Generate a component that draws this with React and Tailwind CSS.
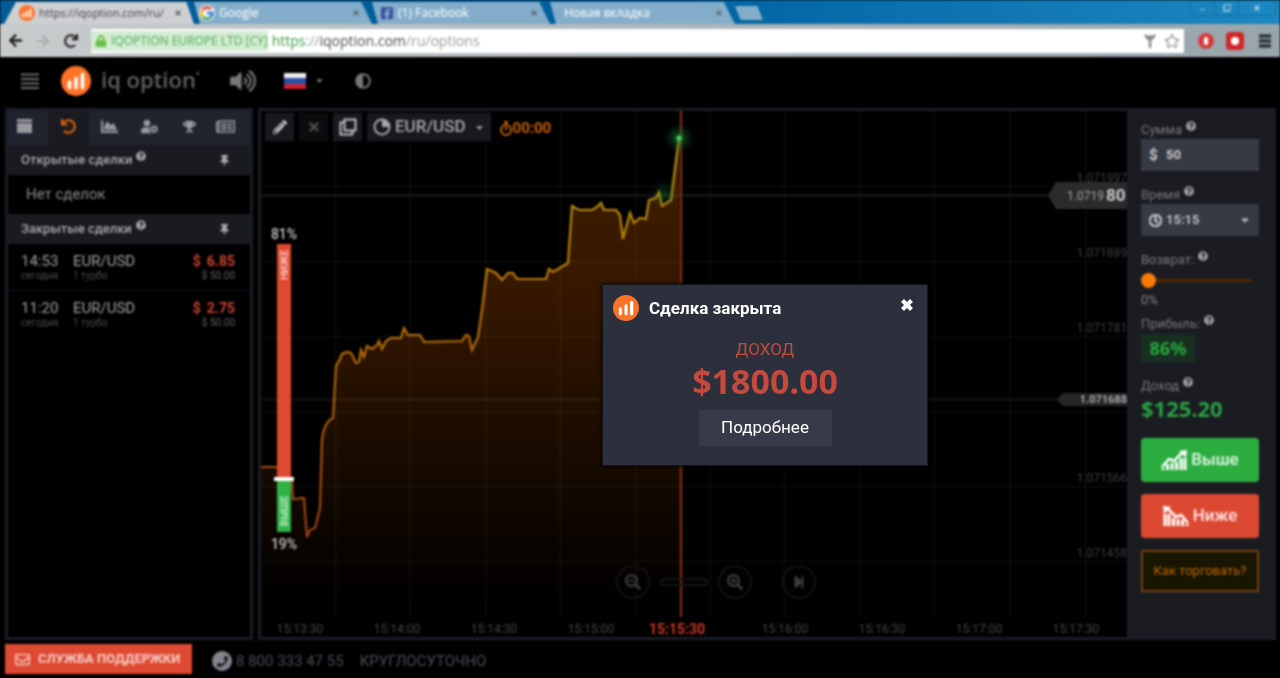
import React from "react";
import {
  FaArrowLeft, FaArrowRight, FaRedo, FaLock, FaVolumeUp, FaCaretDown, FaAdjust,
  FaUndo, FaChartArea, FaPencilAlt, FaTimes, FaQuestionCircle, FaThumbtack, FaRegStar,
  FaRegEnvelope, FaPhoneAlt, FaSearchMinus, FaSearchPlus, FaStepForward, FaRegClock,
  FaTrophy, FaRegNewspaper, FaUserCog, FaFacebookSquare, FaRegClone,
} from "react-icons/fa";

const LINE =
  "M261 467 L277 467 L292 480 L293 499 L304 498 L307 537 L310 530 L315 528 L320 508 L322 440 Q324 422 333 418 L336 366 Q339 362 342 354 Q347 351 351 353 L356 363 L359 362 L361 350 L364 357 L367 346 L372 349 L377 345 L379 341 L382 349 L386 341 L391 338 L401 338 L404 328 L408 335 L420 335 L424 342 L462 341 L466 335 L469 336 L472 350 L478 337 L482 310 L487 269 L496 273 L502 280 L508 273 L513 273 L517 279 L546 279 L549 269 L553 272 L568 263 L572 206 L579 210 L592 210 L597 207 L601 203 L604 210 L616 210 L620 215 L623 239 L630 213 L634 223 L640 218 L646 219 L649 200 L656 198 L659 192 L662 206 L671 200 L679 138";

function BrandMark({ className }) {
  return (
    <svg viewBox="0 0 30 30" className={className} aria-hidden="true">
      <circle cx="15" cy="15" r="15" fill="#ff7328" />
      <g stroke="#fff" strokeWidth="3.600" strokeLinecap="round">
        <path d="M8.500 21.500V16M15 21.500V12.500M21.500 21.500V8.500" />
      </g>
    </svg>
  );
}

function Tab({ icon, title, className }) {
  return (
    <div className={`flex h-[22px] items-center gap-1 pr-3 ${className}`}>
      {icon}
      <span className="flex-1 whitespace-nowrap">{title}</span>
      <button aria-label="Закрыть вкладку" className="text-[#5c6670]"><FaTimes size={8} /></button>
    </div>
  );
}

function GoogleMark() {
  return (
    <svg viewBox="0 0 16 16" className="h-4 w-4 shrink-0" aria-hidden="true">
      <circle cx="8" cy="8" r="8" fill="#f4f4f4" />
      <g fill="none" strokeWidth="3">
        <path d="M3.500 5A5.500 5.500 0 0 1 12 4" stroke="#e2574c" />
        <path d="M3.500 5A5.500 5.500 0 0 0 4 12" stroke="#eec23c" />
        <path d="M4 12A5.500 5.500 0 0 0 11 12.500" stroke="#4caf6a" />
        <path d="M11 12.500A5.500 5.500 0 0 0 13.500 8H8" stroke="#4d86d8" />
      </g>
    </svg>
  );
}

function BrowserChrome() {
  const idle = "bg-[#83adca] text-[12px] text-white [clip-path:polygon(0_0,94%_0,100%_100%,6px_100%)]";
  return (
    <div className="font-['Open_Sans','Noto_Sans',sans-serif]">
      <div className="flex h-6 items-end justify-between bg-gradient-to-r from-[#005a96] via-[#00609f] to-[#1c88c2]">
        <div className="flex items-end pl-1">
          <Tab className="w-[190px] bg-[#cdcfd0] pl-[15px] text-[11px] text-[#4b4650] [clip-path:polygon(12px_0,96%_0,100%_100%,0_100%)]" icon={<BrandMark className="h-4 w-4 shrink-0" />} title="https://iqoption.com/ru/" />
          <Tab className={`w-[178px] pl-[5px] ${idle}`} icon={<GoogleMark />} title="Google" />
          <Tab className={`w-[178px] pl-2 ${idle}`} icon={<FaFacebookSquare className="shrink-0 text-[#3a559f]" size={14} />} title="(1) Facebook" />
          <Tab className={`w-[185px] pl-[14px] ${idle}`} title="Новая вкладка" />
          <button aria-label="Открыть вкладку" className="mb-1 h-[14px] w-7 bg-[#83adca] [clip-path:polygon(0_0,80%_0,100%_100%,20%_100%)]" />
        </div>
        <div className="mb-2 mr-1 flex h-4 divide-x divide-[#1670a3] border border-[#1670a3] text-[11px] leading-3 text-[#b9d9ea]">
          <button aria-label="Свернуть" className="w-6">–</button>
          <button aria-label="Развернуть" className="flex w-6 items-center justify-center"><FaRegClone size={8} /></button>
          <button aria-label="Закрыть" className="flex w-9 items-center justify-center"><FaTimes size={8} /></button>
        </div>
      </div>
      <div className="flex h-[33px] items-center bg-gradient-to-r from-[#c9cccd] to-[#98a5ad] pl-2 text-[#1d1d1d]">
        <button aria-label="Назад" className="w-7"><FaArrowLeft size={15} /></button>
        <button aria-label="Вперёд" className="w-7 text-[#a9abac]"><FaArrowRight size={14} /></button>
        <button aria-label="Обновить" className="w-[27px]"><FaRedo size={14} /></button>
        <div className="flex h-6 flex-1 items-center bg-white pr-1">
          <span className="flex h-5 items-center gap-1 whitespace-nowrap bg-[#d3ecd3] pl-1 text-[12px] text-[#4fae55]">
            <FaLock className="text-[#6cc04a]" size={12} />
            IQOPTION EUROPE LTD [CY]
          </span>
          <span className="flex-1 pl-1 text-[14px] text-[#a0a0a0]">
            <span className="text-[#3fa048]">https</span>://<span className="text-[#555]">iqoption.com</span>/ru/options
          </span>
          <svg viewBox="0 0 12 14" className="mr-2 h-[14px] w-3" fill="none" stroke="#888" strokeWidth="2.500" aria-hidden="true"><path d="M1 1L6 6L11 1M6 1V14M2 4H10" /></svg>
          <FaRegStar className="text-[#999]" size={16} />
        </div>
        <div className="flex items-center gap-3 pl-[14px] pr-2">
          <span className="flex h-4 w-4 items-center justify-center rounded-full bg-[#d43c3c]"><span className="h-2 w-1 rounded-full bg-white" /></span>
          <span className="flex h-[18px] w-[18px] items-center justify-center rounded-sm bg-[#d02828]"><span className="h-2 w-2 rounded-full bg-white" /></span>
          <button aria-label="Меню браузера" className="pl-0.5">
            <svg viewBox="0 0 14 14" className="h-[14px] w-[14px]" aria-hidden="true"><path d="M1 2H13M1 7H13M1 12H13" stroke="#2f3437" strokeWidth="3.500" /></svg>
          </button>
        </div>
      </div>
    </div>
  );
}

function SiteHeader() {
  return (
    <header className="flex h-[51px] items-center pb-1 pl-[21px] text-[#777]">
      <button aria-label="Меню">
        <svg viewBox="0 0 18 16" className="h-4 w-[18px]" aria-hidden="true"><path d="M0 1.500H18M0 6H18M0 10.500H18M0 15H18" stroke="#6c6c6c" strokeWidth="2" /></svg>
      </button>
      <BrandMark className="ml-[22px] h-[30px] w-[30px]" />
      <span className="ml-[10px] mb-1 flex font-['Open_Sans',sans-serif] text-[22px] font-semibold leading-7 text-[#606060]">
        iq option<span className="text-[10px] leading-4">•</span>
      </span>
      <button aria-label="Звук" className="ml-[30px]"><FaVolumeUp size={26} /></button>
      <button aria-label="Язык" className="ml-7 flex items-center gap-2">
        <svg viewBox="0 0 22 16" className="h-4 w-[22px]" aria-hidden="true">
          <path fill="#eee" d="M0 0h22v6H0z" /><path fill="#2a50a8" d="M0 5h22v6H0z" /><path fill="#d32030" d="M0 11h22v5H0z" />
        </svg>
        <FaCaretDown size={11} />
      </button>
      <button aria-label="Тема" className="ml-[30px]"><FaAdjust size={16} /></button>
    </header>
  );
}

function SectionTitle({ children }) {
  return (
    <div className="flex h-[30px] items-center bg-[#191b21] pl-[13px] pr-5 text-[13px] font-medium text-[#a9aaad]">
      <h2>{children}</h2>
      <FaQuestionCircle size={10} className="mb-2 ml-1" />
      <button aria-label="Закрепить" className="ml-auto"><FaThumbtack size={11} /></button>
    </div>
  );
}

const deals = [
  { time: "14:53", profit: "6.85" },
  { time: "11:20", profit: "2.75" },
];

function DealsPanel() {
  const item = "flex h-[34px] w-10 items-center justify-center pb-1";
  return (
    <aside className="w-[248px] shrink-0 border-[3px] border-[#1a1d26]">
      <nav className="flex h-[34px] items-center bg-[#20242f] text-[#97999d]">
        <button aria-label="Портфель" className={`${item} pr-2`}>
          <svg viewBox="0 0 15 14" className="h-[14px] w-[15px]" fill="currentColor"><path d="M0 0h15v3H0zM0 4h15v10H0z" /></svg>
        </button>
        <button aria-label="История" className="flex h-[34px] w-[41px] items-center justify-center bg-[#191b21] pb-1 text-[#dc650d]"><FaUndo size={15} /></button>
        <button aria-label="Графики" className={item}><FaChartArea size={17} /></button>
        <button aria-label="Сообщество" className={item}><FaUserCog size={17} /></button>
        <button aria-label="Турниры" className={item}><FaTrophy size={13} /></button>
        <button aria-label="Новости" className={`${item} pr-2`}><FaRegNewspaper size={19} /></button>
      </nav>
      <SectionTitle>Открытые сделки</SectionTitle>
      <p className="flex h-[39px] items-center pl-[18px] text-[15px] text-[#8b8b8b]">Нет сделок</p>
      <SectionTitle>Закрытые сделки</SectionTitle>
      <ul>
        {deals.map((d) => (
          <li key={d.time} className="flex h-[47px] items-start border-b border-[#121318] pl-[13px] pr-[15px] pt-2 text-[15px] leading-[18px] text-[#a0a0a0] last:border-0">
            <div className="w-[52px]">{d.time}<div className="text-[10px] leading-[11px] text-[#4a4a4a]">сегодня</div></div>
            <div className="flex-1">EUR/USD<div className="text-[10px] leading-[11px] text-[#4a4a4a]">1 турбо</div></div>
            <div className="text-right text-[14px] font-bold text-[#cf4433]">
              <div className="flex justify-end gap-[6px]"><span>$</span><span>{d.profit}</span></div>
              <div className="text-[10px] font-normal leading-[11px] text-[#606060]">$ 50.00</div>
            </div>
          </li>
        ))}
      </ul>
    </aside>
  );
}

function Plot() {
  return (
    <svg viewBox="261 111 866 526" className="block w-full bg-black font-['Roboto',sans-serif]" role="img" aria-label="График EUR/USD">
      <defs>
        <linearGradient id="area" gradientUnits="userSpaceOnUse" x1="0" y1="138" x2="0" y2="600">
          <stop offset="0" stopColor="#3f1f00" /><stop offset="0.35" stopColor="#351700" /><stop offset="0.75" stopColor="#140900" /><stop offset="1" stopColor="#000" />
        </linearGradient>
        <linearGradient id="stroke" gradientUnits="userSpaceOnUse" x1="0" y1="138" x2="0" y2="540">
          <stop offset="0" stopColor="#b09a18" /><stop offset="0.35" stopColor="#bd7a08" /><stop offset="1" stopColor="#9c4010" />
        </linearGradient>
        <radialGradient id="glow"><stop offset="0" stopColor="#1ea048" stopOpacity="0.600" /><stop offset="1" stopColor="#0b5a20" stopOpacity="0" /></radialGradient>
      </defs>
      <path d={`${LINE} L681 617 L261 617 Z`} fill="url(#area)" />
      <g stroke="#fff" strokeOpacity="0.060">
        <path d="M335.500 111V617M410.500 111V617M485.500 111V617M560.500 111V617M635.500 111V617M710.500 111V617M784.500 111V617M859.500 111V617M934.500 111V617M1010.500 111V617M1085.500 111V617" />
        <path d="M261 186.500H1127M261 261.500H1127M261 336.500H1127M261 411.500H1127M261 486.500H1127M261 561.500H1127" />
        <path d="M261 195.500H1127" strokeOpacity="0.110" strokeWidth="2" />
        <path d="M261 399.500H1127" strokeOpacity="0.080" strokeWidth="2" />
      </g>
      <path d={LINE} fill="none" stroke="url(#stroke)" strokeWidth="2.200" />
      <path d="M681 111V617" stroke="#80301e" strokeWidth="2.200" />
      <circle cx="664" cy="194" r="15" fill="url(#glow)" opacity="0.500" />
      <circle cx="679" cy="138" r="15" fill="url(#glow)" />
      <circle cx="679" cy="138" r="2.600" fill="#3bd75c" />

      <rect x="277" y="244" width="14" height="234" fill="#de4930" />
      <rect x="277" y="480" width="14" height="52" fill="#2fb347" />
      <rect x="274" y="477" width="20" height="4" fill="#fff" />
      <g fill="#c4c4c4" fontSize="14" fontWeight="500" textAnchor="middle">
        <text x="284" y="239">81%</text><text x="284" y="549">19%</text>
      </g>
      <g fill="#fff" fillOpacity="0.700" fontSize="10" fontWeight="700" textAnchor="middle">
        <text transform="translate(288 265) rotate(-90)">НИЖЕ</text>
        <text transform="translate(288 511) rotate(-90)">ВЫШЕ</text>
      </g>

      <g fill="#3e3e3e" fontSize="12" textAnchor="end">
        <text x="1127" y="182">1.071997</text><text x="1127" y="257">1.071889</text><text x="1127" y="332">1.071781</text>
        <text x="1127" y="482">1.071566</text><text x="1127" y="557">1.071458</text>
      </g>
      <path d="M1048 195.500L1056 182H1127V209H1056Z" fill="#2b2b2b" />
      <text x="1067" y="200" fill="#aaa" fontSize="12">1.0719</text>
      <text x="1106" y="201" fill="#ccc" fontSize="17" fontWeight="700">80</text>
      <path d="M1063 393H1127V406H1063L1057 399.500Z" fill="#272727" />
      <text x="1127" y="403" fill="#a6a6a6" fontSize="11" fontWeight="700" textAnchor="end">1.071688</text>

      <g fill="#454545" fontSize="12" textAnchor="middle">
        <text x="300" y="633">15:13:30</text><text x="397" y="633">15:14:00</text><text x="494" y="633">15:14:30</text><text x="591" y="633">15:15:00</text>
        <text x="785" y="633">15:16:00</text><text x="882" y="633">15:16:30</text><text x="979" y="633">15:17:00</text><text x="1076" y="633">15:17:30</text>
        <text x="677" y="634" fill="#cf3a27" fontSize="14" fontWeight="700">15:15:30</text>
      </g>
    </svg>
  );
}

function PlotToolbar() {
  const tool = "flex h-7 w-[29px] items-center justify-center";
  return (
    <div className="absolute left-1 top-0.5 flex items-center gap-[5px] text-[#c0c0c0]">
      <button aria-label="Рисование" className={`${tool} bg-[#17191f]`}><FaPencilAlt size={14} /></button>
      <button aria-label="Удалить" className={`${tool} bg-[#0c0c0e] text-[#4d4d4d]`}><FaTimes size={14} /></button>
      <button aria-label="Окна" className={`${tool} bg-[#17191f]`}>
        <svg viewBox="0 0 18 18" className="h-[18px] w-[18px]" fill="none" stroke="currentColor" strokeWidth="2" aria-hidden="true"><path d="M5.500 1.500H16.500V12.500H5.500ZM5 4.500H1.500V16.500H13.500V13" /></svg>
      </button>
      <button className="flex h-7 items-center gap-1 bg-[#17191f] px-[6px] text-[17px] font-medium text-[#a8a8a8]">
        <svg viewBox="0 0 18 18" className="h-[18px] w-[18px]" aria-hidden="true"><circle cx="9" cy="9" r="7.500" fill="none" stroke="currentColor" strokeWidth="2" /><path d="M9 9V1.500A7.500 7.500 0 0 1 16.500 9Z" fill="currentColor" /></svg>
        EUR/USD <FaCaretDown size={11} className="ml-1" />
      </button>
      <span className="ml-1 mt-0.5 flex items-center gap-px text-[15px] font-bold text-[#c45f06]">
        <svg viewBox="0 0 12 15" className="h-[15px] w-3" fill="none" stroke="currentColor" strokeWidth="2" aria-hidden="true"><circle cx="6" cy="9" r="5" /><path d="M4 1H8M6 1V4M6 6V9" /></svg>
        00:00
      </span>
    </div>
  );
}

function ZoomControls() {
  const round = "flex h-[34px] w-[34px] items-center justify-center rounded-full border-2 border-[#131313]";
  return (
    <div className="absolute bottom-[38px] left-[41%] flex items-center text-[#3c3c3c]">
      <button aria-label="Уменьшить" className={round}><FaSearchMinus size={16} /></button>
      <div className="mx-[10px] h-2 w-12 rounded-full border-2 border-[#161616]" />
      <button aria-label="Увеличить" className={round}><FaSearchPlus size={16} /></button>
      <button aria-label="К последней цене" className={`${round} ml-[30px]`}><FaStepForward size={14} /></button>
    </div>
  );
}

function FieldLabel({ htmlFor, className = "", children }) {
  return (
    <label htmlFor={htmlFor} className={`flex h-4 items-center text-[13px] leading-4 text-[#77797d] ${className}`}>
      {children}
      <FaQuestionCircle size={10} className="mb-2 ml-1 text-[#a4a5a8]" />
    </label>
  );
}

function TrendIcon({ down }) {
  return (
    <svg viewBox="0 0 26 20" className={down ? "h-5 w-[26px] -scale-x-100" : "h-5 w-[26px]"} aria-hidden="true">
      <path d="M1 17L8 9L13 11L21 3" fill="none" stroke="#fff" strokeWidth="2.500" />
      <path d="M18 1L26 0L25 8Z" fill="#fff" />
      <path d="M2 20V18M6.500 20V14M11 20V13M15.500 20V12M20 20V8M24 20V8" stroke="#fff" strokeWidth="3" />
    </svg>
  );
}

function TradePanel() {
  return (
    <form className="flex w-[146px] shrink-0 flex-col bg-[#1a1c22] px-[14px] pt-[11px]" onSubmit={(e) => e.preventDefault()}>
      <FieldLabel htmlFor="amount">Сумма</FieldLabel>
      <div className="mt-px flex h-8 items-center bg-[#363a45] pl-2 text-[13px] font-bold text-[#c8c8c8]">
        <label htmlFor="amount" className="w-[17px] shrink-0 text-[15px]">$</label>
        <input id="amount" defaultValue="50" className="w-full min-w-0 bg-transparent pr-2 outline-none" />
      </div>
      <FieldLabel htmlFor="time" className="mt-4">Время</FieldLabel>
      <div className="mt-px flex h-8 items-center gap-1 bg-[#363a45] px-2 text-[13px] font-bold text-[#c0c0c0]">
        <FaRegClock size={13} strokeWidth={40} stroke="currentColor" className="shrink-0" />
        <select id="time" className="min-w-0 flex-1 appearance-none bg-transparent"><option>15:15</option></select>
        <FaCaretDown size={12} className="shrink-0" />
      </div>
      <FieldLabel htmlFor="refund" className="mt-4">Возврат:</FieldLabel>
      <input
        id="refund" type="range" min="0" max="100" defaultValue="0"
        className="mt-1 h-4 w-[110px] appearance-none bg-transparent [&::-webkit-slider-runnable-track]:h-[3px] [&::-webkit-slider-runnable-track]:bg-[#552600] [&::-webkit-slider-thumb]:-mt-[6px] [&::-webkit-slider-thumb]:h-[15px] [&::-webkit-slider-thumb]:w-[15px] [&::-webkit-slider-thumb]:appearance-none [&::-webkit-slider-thumb]:rounded-full [&::-webkit-slider-thumb]:bg-[#fb7b05]"
      />
      <span className="mt-1 h-4 text-[13px] leading-4 text-[#85878a]">0%</span>
      <FieldLabel htmlFor="profit" className="mt-2">Прибыль:</FieldLabel>
      <output id="profit" className="mt-0.5 flex h-7 w-[54px] items-center justify-center bg-[#17301f] font-['Noto_Sans',sans-serif] text-[18px] font-bold text-[#29a73f]">86%</output>
      <FieldLabel htmlFor="income" className="mt-4">Доход</FieldLabel>
      <output id="income" className="h-6 font-['Noto_Sans',sans-serif] text-[22px] font-bold leading-7 text-[#28a041]">$125.20</output>
      <button className="mt-5 flex h-11 items-center justify-center gap-1 rounded-sm bg-[#2cad40] text-[17px] font-medium text-[#e9f7ea]"><TrendIcon />Выше</button>
      <button className="mt-3 flex h-11 items-center justify-center gap-1 rounded-sm bg-[#dc4932] text-[17px] font-medium text-[#fbe9e6]"><TrendIcon down />Ниже</button>
      <a href="#how" className="mt-3 flex h-[42px] items-center justify-center whitespace-nowrap border-2 border-[#794009] bg-[#181600] text-[13px] text-[#c06505]">Как торговать?</a>
    </form>
  );
}

function SiteFooter() {
  return (
    <footer className="flex h-[38px] items-center pl-[5px] text-[15px] text-[#4a4d55]">
      <button className="flex h-[30px] w-[187px] items-center gap-2 whitespace-nowrap bg-[#de4932] pl-[10px] text-[13px] font-bold text-[#f5cdc5]">
        <FaRegEnvelope size={15} />СЛУЖБА ПОДДЕРЖКИ
      </button>
      <a href="tel:88003334755" className="ml-5 mt-1 flex items-center gap-1">
        <span className="flex h-5 w-5 items-center justify-center rounded-full bg-[#82858c]"><FaPhoneAlt size={11} className="-scale-x-100 text-[#1b1c20]" /></span>
        8 800 333 47 55
      </a>
      <span className="ml-4 mt-1">КРУГЛОСУТОЧНО</span>
    </footer>
  );
}

function DealClosedDialog() {
  return (
    <div className="fixed inset-0 flex items-center justify-center pl-[250px] pt-[71px]">
      <div role="dialog" aria-modal="true" aria-labelledby="deal-title" className="flex w-[326px] flex-col items-center border border-[#12141a] bg-[#2b303c] pb-[19px] shadow-[0_0_4px_#000]">
        <div className="flex h-12 w-full items-center pl-[10px] pr-[13px]">
          <BrandMark className="mb-0.5 h-[26px] w-[26px]" />
          <h1 id="deal-title" className="ml-[10px] flex-1 text-[17px] font-bold text-white">Сделка закрыта</h1>
          <button aria-label="Закрыть" className="mb-2 text-white">
            <svg viewBox="0 0 14 14" className="h-[14px] w-[14px]"><path d="M2.500 2.500L11.500 11.500M11.500 2.500L2.500 11.500" stroke="currentColor" strokeWidth="4.200" /></svg>
          </button>
        </div>
        <p className="mt-1 text-[17px] leading-6 text-[#c04c40]">ДОХОД</p>
        <p className="font-['Noto_Sans',sans-serif] text-[34px] font-bold leading-10 text-[#c54a3d]">$1800.00</p>
        <button className="mt-[9px] h-9 w-[133px] rounded-xs bg-[#373b49] text-[17px] text-white">Подробнее</button>
      </div>
    </div>
  );
}

export default function App() {
  return (
    <div className="min-h-screen overflow-hidden bg-black font-['Roboto',sans-serif]">
      <div className="blur-[1px]">
        <BrowserChrome />
        <SiteHeader />
        <main className="flex gap-[5px] pl-[5px] pr-1">
          <DealsPanel />
          <section className="flex min-w-0 flex-1 border-[3px] border-[#1a1d26]">
            <div className="relative min-w-0 flex-1">
              <Plot />
              <PlotToolbar />
              <ZoomControls />
            </div>
            <TradePanel />
          </section>
        </main>
        <SiteFooter />
      </div>
      <DealClosedDialog />
    </div>
  );
}
